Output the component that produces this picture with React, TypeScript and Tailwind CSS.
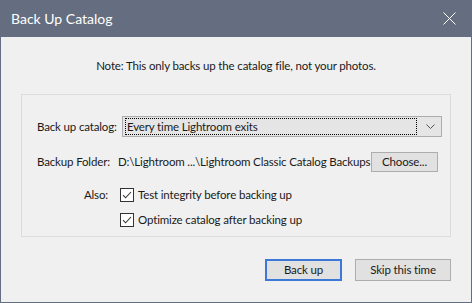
const font = { fontFamily: 'Lato, "Noto Sans", sans-serif' };

function Checkbox({ label }: { label: string }) {
  return (
    <div className="flex h-[15px] items-center gap-[4px]">
      <span className="flex h-[14px] w-[14px] items-center justify-center border border-[#333333] bg-white">
        <svg width="10" height="8" viewBox="0 0 10 8" fill="none">
          <path d="M1 4.2 L3.6 6.8 L9 1" stroke="#333333" strokeWidth="1.1" />
        </svg>
      </span>
      <span className="whitespace-nowrap">{label}</span>
    </div>
  );
}

export default function App() {
  return (
    <div
      className="flex h-[303px] w-[472px] flex-col border-x border-b border-[#646e80] bg-[#f0f0f0] text-[11.5px] tracking-[-0.15px] text-[#1a1a1a]"
      style={font}
    >
      <div className="flex h-[37px] shrink-0 items-center justify-between bg-[#646e80] pl-[10px] pr-[15px] text-white">
        <span className="text-[14px] tracking-normal">Back Up Catalog</span>
        <svg width="13" height="13" viewBox="0 0 13 13">
          <path d="M0.5 0.5 L12.5 12.5 M12.5 0.5 L0.5 12.5" stroke="#ffffff" strokeWidth="1" />
        </svg>
      </div>

      <div className="flex flex-1 flex-col px-[20px] pt-[21px]">
        <p className="h-[16px] text-center leading-[16px]">
          Note: This only backs up the catalog file, not your photos.
        </p>

        <div className="mt-[20px] flex h-[143px] flex-col border border-[#dcdcdc] pl-[15px] pr-[8px] pt-[21px]">
          <div className="flex h-[21px] items-center">
            <span className="w-[85px] shrink-0 whitespace-nowrap">Back up catalog:</span>
            <div className="flex h-[21px] flex-1 items-center border border-[#adadad] bg-[#e5e5e5] pl-[2px] pr-[6px]">
              <div className="flex h-[17px] flex-1 items-center border border-dotted border-black px-[1px]">
                Every time Lightroom exits
              </div>
              <svg className="ml-[9px]" width="9" height="5" viewBox="0 0 9 5" fill="none">
                <path d="M0.5 0.5 L4.5 4.5 L8.5 0.5" stroke="#555555" strokeWidth="1" />
              </svg>
            </div>
          </div>

          <div className="mt-[15px] flex h-[20px] items-center">
            <span className="w-[81px] shrink-0 whitespace-nowrap">Backup Folder:</span>
            <span className="flex-1 whitespace-nowrap">D:\Lightroom ...\Lightroom Classic Catalog Backups</span>
            <button
              className="mr-[4px] h-[20px] w-[67px] shrink-0 border border-[#adadad] bg-[#e1e1e1]"
              type="button"
            >
              Choose...
            </button>
          </div>

          <div className="mt-[15px] flex">
            <span className="w-[83px] shrink-0 pr-[12px] text-right leading-[15px]">Also:</span>
            <div className="flex flex-col gap-[10px]">
              <Checkbox label="Test integrity before backing up" />
              <Checkbox label="Optimize catalog after backing up" />
            </div>
          </div>
        </div>

        <div className="mt-[22px] flex justify-end gap-[13px]">
          <button
            className="h-[22px] w-[77px] border-2 border-[#3c78d8] bg-[#e1e1e1]"
            type="button"
          >
            Back up
          </button>
          <button
            className="h-[22px] w-[96px] border border-[#adadad] bg-[#e1e1e1]"
            type="button"
          >
            Skip this time
          </button>
        </div>
      </div>
    </div>
  );
}
